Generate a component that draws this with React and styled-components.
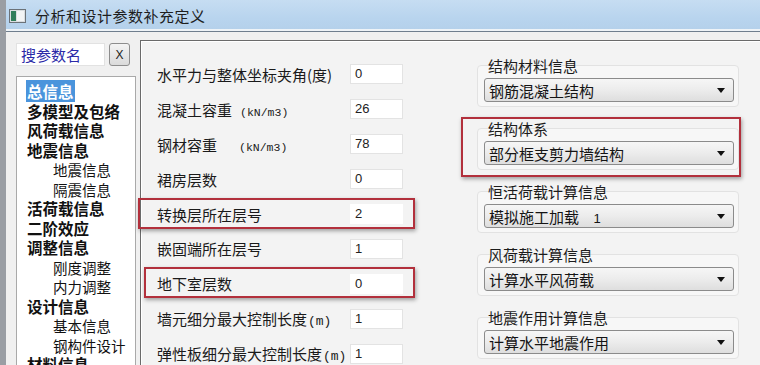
import styled, { createGlobalStyle } from "styled-components";

const GlobalStyle = createGlobalStyle`
  html, body {
    margin: 0;
    padding: 0;
    width: 760px;
    height: 365px;
    overflow: hidden;
    background: #f0f0f0;
  }
  * { box-sizing: border-box; }
`;

const FONT = `"Noto Sans CJK SC", "Noto Sans", sans-serif`;

const Window = styled.div`
  width: 760px;
  height: 365px;
  display: flex;
  flex-direction: column;
  font-family: ${FONT};
  color: #1a1a1a;
  overflow: hidden;
  border-left: 6px solid #9a9ea4;
`;

const TitleBar = styled.div`
  height: 32px;
  flex: none;
  display: flex;
  align-items: center;
  gap: 9px;
  padding-left: 3px;
  background: linear-gradient(180deg, #c6ddf2 0%, #b8d4ee 60%, #b4d0ea 100%);
  border-bottom: 1px solid #6f7e8e;
  box-shadow: inset 0 -2px 0 #eef3f7;
`;

const Title = styled.div`
  font-size: 15px;
  color: #1e1e1e;
  letter-spacing: 0.5px;
`;

const Body = styled.div`
  flex: 1;
  display: flex;
  min-height: 0;
`;

const Sidebar = styled.div`
  width: 134px;
  flex: none;
  padding: 11px 0 0 10px;
  display: flex;
  flex-direction: column;
`;

const SearchRow = styled.div`
  display: flex;
  gap: 4px;
  height: 23px;
`;

const SearchBox = styled.div`
  width: 89px;
  background: #fff;
  border: 1px solid #e2e2e2;
  color: #2b2aa8;
  font-size: 15px;
  line-height: 21px;
  padding-left: 4px;
`;

const ClearButton = styled.div`
  width: 21px;
  height: 23px;
  border: 1px solid #8d8d8d;
  border-radius: 3px;
  background: linear-gradient(180deg, #f4f4f4, #dadada);
  font-family: "Liberation Sans", sans-serif;
  font-size: 12px;
  display: flex;
  align-items: center;
  justify-content: center;
  color: #222;
`;

const Tree = styled.div`
  margin-top: 10px;
  width: 120px;
  flex: 1;
  background: #fff;
  border: 1px solid #a9a9a9;
  border-bottom: none;
  padding: 5px 0 0 9px;
  overflow: hidden;
`;

const TreeItem = styled.div`
  height: 19.5px;
  line-height: 19.5px;
  white-space: nowrap;
  font-size: ${(p) => (p.$sub ? "14.5px" : "15.5px")};
  font-weight: ${(p) => (p.$sub ? 400 : 700)};
  padding-left: ${(p) => (p.$sub ? "26px" : "0")};
  color: #111;
  & > span {
    background: ${(p) => (p.$selected ? "#4a94dc" : "transparent")};
    color: ${(p) => (p.$selected ? "#fff" : "inherit")};
    padding: 0 1px;
  }
`;

const Panel = styled.div`
  flex: 1;
  margin-top: 8px;
  border-top: 1px solid #6a6a6a;
  border-left: 1px solid #6a6a6a;
  background: #f3f3f3;
  box-shadow: inset 1px 1px 0 #fff;
  display: flex;
`;

const FieldColumn = styled.div`
  width: 280px;
  padding: 16px 0 0 16px;
  flex: none;
`;

const FieldRow = styled.div`
  position: relative;
  height: 34.9px;
  display: flex;
  align-items: center;
  &::after {
    content: "";
    display: ${(p) => (p.$hl ? "block" : "none")};
    position: absolute;
    left: ${(p) => p.$hlLeft}px;
    right: 6px;
    top: 1px;
    height: 27px;
    border: 2px solid #b2303c;
    box-shadow: 1px 2px 4px rgba(0, 0, 0, 0.35);
    pointer-events: none;
  }
`;

const FieldLabel = styled.div`
  width: 193px;
  font-size: 15px;
  white-space: nowrap;
  display: flex;
  align-items: baseline;
`;

const Unit = styled.span`
  font-family: "Liberation Mono", monospace;
  font-size: ${(p) => (p.$small ? "13px" : "11.5px")};
  margin-left: ${(p) => p.$gap}px;
`;

const FieldInput = styled.div`
  width: 53px;
  height: 20px;
  background: #fff;
  border: 1px solid ${(p) => (p.$plain ? "#fff" : "#e3e3e3")};
  font-family: "Liberation Sans", sans-serif;
  font-size: 13px;
  line-height: 18px;
  padding-left: 4px;
  color: #222;
`;

const GroupColumn = styled.div`
  padding: 13px 0 0 56px;
  width: 318px;
`;

const Group = styled.div`
  position: relative;
  padding: 0 5px 0 7px;
  margin-bottom: 15px;
  &::before {
    content: "";
    position: absolute;
    left: 0;
    right: 0;
    top: 11px;
    bottom: -5px;
    border: 1px solid #e2e2e2;
    border-radius: 4px;
    background: #f7f7f7;
    z-index: 0;
  }
  &::after {
    content: "";
    display: ${(p) => (p.$hl ? "block" : "none")};
    position: absolute;
    left: -16px;
    right: -2px;
    top: 0;
    bottom: -12px;
    border: 2px solid #b2303c;
    box-shadow: 1px 2px 4px rgba(0, 0, 0, 0.35);
  }
`;

const GroupLabel = styled.div`
  position: relative;
  height: 24px;
  line-height: 24px;
  font-size: 15px;
  padding-left: 4px;
  color: #1c1c1c;
`;

const Select = styled.div`
  position: relative;
  height: 24px;
  border: 1px solid #8b8b8b;
  border-radius: 3px;
  background: linear-gradient(180deg, #f6f6f6 0%, #ececec 50%, #dedede 100%);
  display: flex;
  align-items: center;
  justify-content: space-between;
  padding: 0 8px 0 4px;
  font-size: 15px;
  color: #141414;
`;

const SelectValue = styled.span`
  white-space: pre;
  & > b {
    font-family: "Liberation Sans", sans-serif;
    font-weight: 400;
    font-size: 13px;
  }
`;

const Arrow = styled.span`
  width: 0;
  height: 0;
  border-left: 4px solid transparent;
  border-right: 4px solid transparent;
  border-top: 5px solid #111;
`;

const tree = [
  { t: "总信息", selected: true },
  { t: "多模型及包络" },
  { t: "风荷载信息" },
  { t: "地震信息" },
  { t: "地震信息", sub: true },
  { t: "隔震信息", sub: true },
  { t: "活荷载信息" },
  { t: "二阶效应" },
  { t: "调整信息" },
  { t: "刚度调整", sub: true },
  { t: "内力调整", sub: true },
  { t: "设计信息" },
  { t: "基本信息", sub: true },
  { t: "钢构件设计", sub: true },
  { t: "材料信息" },
];

const fields = [
  { label: "水平力与整体坐标夹角(度)", value: "0" },
  { label: "混凝土容重", unit: "(kN/m3)", gap: 8, value: "26" },
  { label: "钢材容重", unit: "(kN/m3)", gap: 22, value: "78" },
  { label: "裙房层数", value: "0" },
  { label: "转换层所在层号", value: "2", hl: true, hlLeft: -19 },
  { label: "嵌固端所在层号", value: "1" },
  { label: "地下室层数", value: "0", hl: true, hlLeft: -13 },
  { label: "墙元细分最大控制长度", unit: "(m)", gap: 1, small: true, value: "1" },
  { label: "弹性板细分最大控制长度", unit: "(m)", gap: 1, small: true, value: "1" },
];

const groups = [
  { label: "结构材料信息", value: "钢筋混凝土结构" },
  { label: "结构体系", value: "部分框支剪力墙结构", hl: true },
  { label: "恒活荷载计算信息", value: "模拟施工加载", extra: "1" },
  { label: "风荷载计算信息", value: "计算水平风荷载" },
  { label: "地震作用计算信息", value: "计算水平地震作用" },
];

const AppIcon = () => (
  <svg width="17" height="14" viewBox="0 0 17 14">
    <rect x="0.5" y="0.5" width="16" height="13" fill="#d9dde0" stroke="#6b7278" />
    <rect x="2" y="2" width="5" height="10" fill="#2f7d5a" />
    <rect x="8" y="2" width="7" height="10" fill="#f2f4f5" />
  </svg>
);

export default function App() {
  return (
    <>
      <GlobalStyle />
      <Window>
        <TitleBar>
          <AppIcon />
          <Title>分析和设计参数补充定义</Title>
        </TitleBar>
        <Body>
          <Sidebar>
            <SearchRow>
              <SearchBox>搜参数名</SearchBox>
              <ClearButton>X</ClearButton>
            </SearchRow>
            <Tree>
              {tree.map((item, i) => (
                <TreeItem key={i} $sub={item.sub} $selected={item.selected}>
                  <span>{item.t}</span>
                </TreeItem>
              ))}
            </Tree>
          </Sidebar>
          <Panel>
            <FieldColumn>
              {fields.map((f) => (
                <FieldRow key={f.label} $hl={f.hl} $hlLeft={f.hlLeft}>
                  <FieldLabel>
                    {f.label}
                    {f.unit && (
                      <Unit $gap={f.gap} $small={f.small}>
                        {f.unit}
                      </Unit>
                    )}
                  </FieldLabel>
                  <FieldInput $plain={f.hl}>{f.value}</FieldInput>
                </FieldRow>
              ))}
            </FieldColumn>
            <GroupColumn>
              {groups.map((g) => (
                <Group key={g.label} $hl={g.hl}>
                  <GroupLabel>{g.label}</GroupLabel>
                  <Select>
                    <SelectValue>
                      {g.value}
                      {g.extra && <b>{"    " + g.extra}</b>}
                    </SelectValue>
                    <Arrow />
                  </Select>
                </Group>
              ))}
            </GroupColumn>
          </Panel>
        </Body>
      </Window>
    </>
  );
}
